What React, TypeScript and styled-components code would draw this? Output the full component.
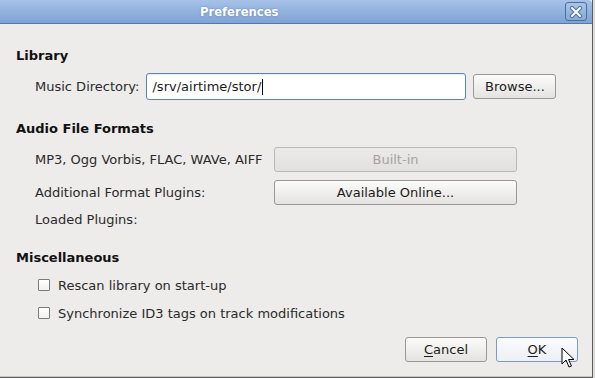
import React from "react";
import styled, { createGlobalStyle } from "styled-components";

const GlobalStyle = createGlobalStyle`
    html, body {
        margin: 0;
        padding: 0;
        background: #dddcda;
    }
    body {
        font-family: "DejaVu Sans", "Liberation Sans", sans-serif;
        font-size: 13px;
        color: #1c1c1c;
    }
`;

const Window = styled.div`
    position: relative;
    box-sizing: border-box;
    width: 593px;
    height: 378px;
    display: flex;
    flex-direction: column;
    background: #edeceb;
    border-right: 1px solid #5d5d5d;
    border-bottom: 1px solid #5d5d5d;
    box-shadow: inset 0 -1px 0 #c8c7c5;
    overflow: hidden;
`;

const TitleBar = styled.div`
    height: 23px;
    flex: none;
    display: flex;
    align-items: center;
    background: linear-gradient(#a6c2e8, #7ea3d4);
    border-bottom: 1px solid #5877a6;
    border-top-right-radius: 4px;
`;

const Title = styled.div`
    padding-left: 200px;
    font-size: 11.6px;
    font-weight: bold;
    color: #fff;
    text-shadow: 0 0 2px #5a7bb0;
`;

const CloseButton = styled.div`
    margin-left: auto;
    margin-right: 5px;
    box-sizing: border-box;
    width: 22px;
    height: 19px;
    border: 1px solid #4f6d9c;
    border-radius: 3px;
    background: linear-gradient(#a9c4e8, #86a9d8);
    display: flex;
    align-items: center;
    justify-content: center;
`;

const Body = styled.div`
    flex: 1;
    display: flex;
    flex-direction: column;
    padding: 24px 14px 0 16px;
`;

const Heading = styled.div<{ top: number }>`
    margin-top: ${p => p.top}px;
    font-weight: bold;
    line-height: 16px;
    color: #111;
`;

const Indent = styled.div<{ top: number; gap: number }>`
    margin-top: ${p => p.top}px;
    margin-left: 19px;
    display: flex;
    flex-direction: column;
    gap: ${p => p.gap}px;
`;

const Row = styled.div<{ h: number }>`
    display: flex;
    align-items: center;
    height: ${p => p.h}px;
`;

const Label = styled.span<{ w?: number }>`
    width: ${p => (p.w ? `${p.w}px` : "auto")};
    flex: none;
    color: #2a2a2a;
    white-space: nowrap;
`;

const PathInput = styled.div`
    box-sizing: border-box;
    width: 320px;
    height: 27px;
    margin-left: 7px;
    padding-left: 5px;
    display: flex;
    align-items: center;
    background: #fff;
    border: 1px solid #5a84bd;
    border-radius: 3px;
    box-shadow: inset 0 1px 1px rgba(0, 0, 0, 0.08);
    color: #1a1a1a;
`;

const Caret = styled.span`
    display: inline-block;
    width: 1px;
    height: 16px;
    background: #000;
    margin-left: 1px;
`;

const Button = styled.div<{ w: number; disabled?: boolean; focused?: boolean; left?: number }>`
    box-sizing: border-box;
    width: ${p => p.w}px;
    height: 25px;
    margin-left: ${p => p.left ?? 0}px;
    flex: none;
    display: flex;
    align-items: center;
    justify-content: center;
    border-radius: 3px;
    border: 1px solid ${p => (p.focused ? "#7d9ac4" : p.disabled ? "#b9b8b6" : "#999896")};
    background: ${p =>
        p.disabled
            ? "linear-gradient(#eceae8, #e2e1df)"
            : p.focused
            ? "linear-gradient(#fbfcfe, #eceff4)"
            : "linear-gradient(#fbfbfa, #e4e3e1)"};
    color: ${p => (p.disabled ? "#a3a2a0" : "#1c1c1c")};
`;

const Mnemonic = styled.span`
    text-decoration: underline;
    text-underline-offset: 2px;
`;

const CheckRow = styled.div`
    display: flex;
    align-items: center;
    height: 20px;
    padding-left: 3px;
    gap: 8px;
    color: #2a2a2a;
`;

const CheckBox = styled.span`
    box-sizing: border-box;
    width: 12px;
    height: 12px;
    border: 1px solid #7c7b79;
    border-radius: 1px;
    background: linear-gradient(#ffffff, #f1f1f0);
`;

const Footer = styled.div`
    margin-top: 14px;
    display: flex;
    justify-content: flex-end;
    gap: 9px;
`;

const Pointer = styled.svg`
    position: absolute;
    left: 561px;
    top: 347px;
`;

export default function App() {
    return (
        <>
            <GlobalStyle />
            <Window>
                <TitleBar>
                    <Title>Preferences</Title>
                    <CloseButton>
                        <svg width="14" height="12" viewBox="0 0 14 12">
                            <path d="M3 2 L11 10 M11 2 L3 10" stroke="#4f6d9c" strokeWidth="4" strokeLinecap="round" />
                            <path d="M3 2 L11 10 M11 2 L3 10" stroke="#fff" strokeWidth="2" strokeLinecap="round" />
                        </svg>
                    </CloseButton>
                </TitleBar>
                <Body>
                    <Heading top={0}>Library</Heading>
                    <Indent top={9} gap={0}>
                        <Row h={27}>
                            <Label>Music Directory:</Label>
                            <PathInput>
                                /srv/airtime/stor/<Caret />
                            </PathInput>
                            <Button w={83} left={7}>Browse...</Button>
                        </Row>
                    </Indent>

                    <Heading top={21}>Audio File Formats</Heading>
                    <Indent top={10} gap={8}>
                        <Row h={25}>
                            <Label w={239}>MP3, Ogg Vorbis, FLAC, WAVe, AIFF</Label>
                            <Button w={243} disabled>Built-in</Button>
                        </Row>
                        <Row h={25}>
                            <Label w={239}>Additional Format Plugins:</Label>
                            <Button w={243}>Available Online...</Button>
                        </Row>
                    </Indent>
                    <Indent top={6} gap={0}>
                        <Row h={16}>
                            <Label>Loaded Plugins:</Label>
                        </Row>
                    </Indent>

                    <Heading top={23}>Miscellaneous</Heading>
                    <Indent top={9} gap={8}>
                        <CheckRow>
                            <CheckBox />
                            Rescan library on start-up
                        </CheckRow>
                        <CheckRow>
                            <CheckBox />
                            Synchronize ID3 tags on track modifications
                        </CheckRow>
                    </Indent>

                    <Footer>
                        <Button w={82}>
                            <span><Mnemonic>C</Mnemonic>ancel</span>
                        </Button>
                        <Button w={82} focused>
                            <span><Mnemonic>O</Mnemonic>K</span>
                        </Button>
                    </Footer>
                </Body>
                <Pointer width="14" height="22" viewBox="0 0 14 22">
                    <path
                        d="M1 1 L1 17 L5 13 L8 20 L10.5 19 L7.5 12.5 L13 12.5 Z"
                        fill="#fff"
                        stroke="#000"
                        strokeWidth="1"
                        strokeLinejoin="round"
                    />
                </Pointer>
            </Window>
        </>
    );
}
